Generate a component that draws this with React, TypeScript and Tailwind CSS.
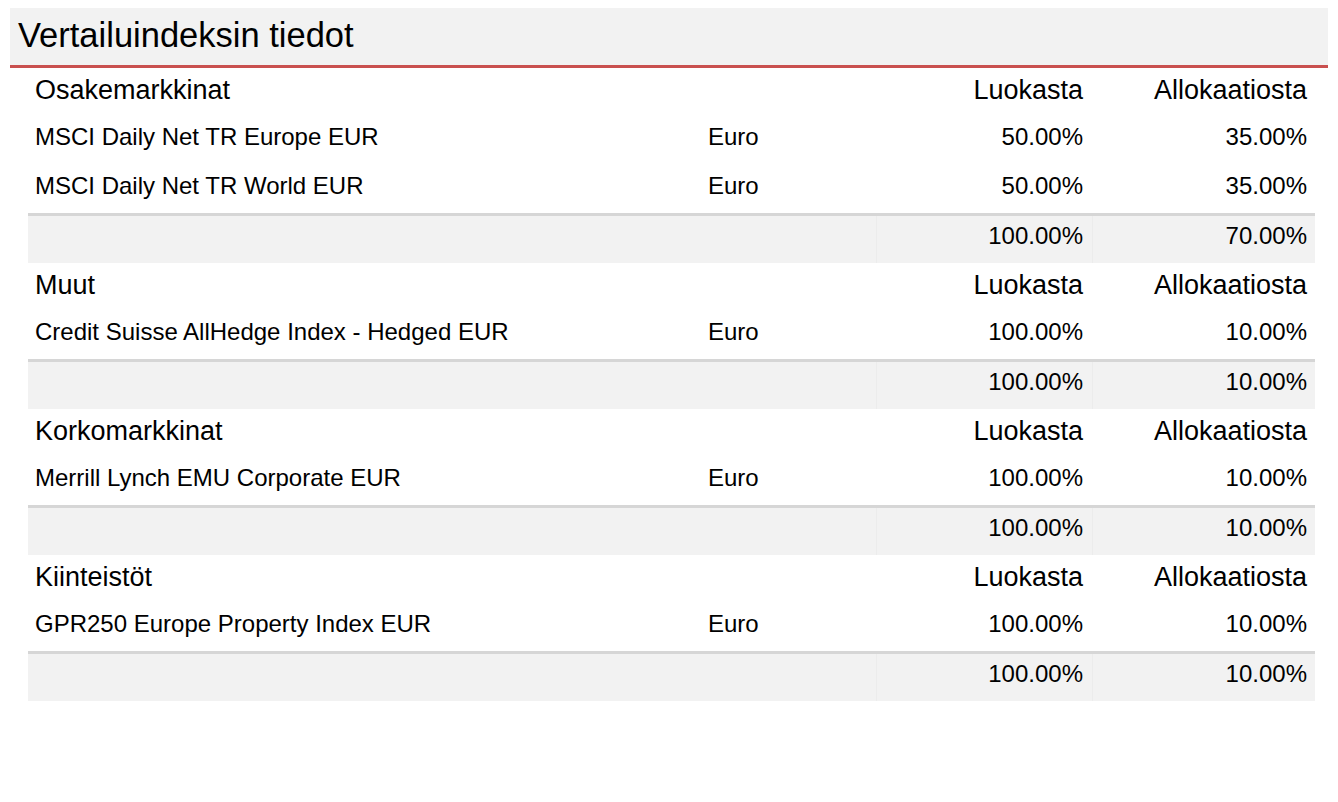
const sections = [
  {
    title: 'Osakemarkkinat',
    rows: [
      { name: 'MSCI Daily Net TR Europe EUR', currency: 'Euro', cls: '50.00%', alloc: '35.00%' },
      { name: 'MSCI Daily Net TR World EUR', currency: 'Euro', cls: '50.00%', alloc: '35.00%' },
    ],
    total: { cls: '100.00%', alloc: '70.00%' },
  },
  {
    title: 'Muut',
    rows: [{ name: 'Credit Suisse AllHedge Index - Hedged EUR', currency: 'Euro', cls: '100.00%', alloc: '10.00%' }],
    total: { cls: '100.00%', alloc: '10.00%' },
  },
  {
    title: 'Korkomarkkinat',
    rows: [{ name: 'Merrill Lynch EMU Corporate EUR', currency: 'Euro', cls: '100.00%', alloc: '10.00%' }],
    total: { cls: '100.00%', alloc: '10.00%' },
  },
  {
    title: 'Kiinteistöt',
    rows: [{ name: 'GPR250 Europe Property Index EUR', currency: 'Euro', cls: '100.00%', alloc: '10.00%' }],
    total: { cls: '100.00%', alloc: '10.00%' },
  },
];

const cols = 'grid grid-cols-[672px_176px_216px_223px]';

export default function App() {
  return (
    <div className="min-h-[802px] bg-white pt-2 font-['Liberation_Sans',Arial,sans-serif] text-black">
      <div className="ml-[10px] w-[1318px]">
        <div className="flex h-[57px] items-center bg-[#f2f2f2] pb-[3px] pl-2 text-[34.5px] leading-none">
          Vertailuindeksin tiedot
        </div>
        <div className="h-[3px] bg-[#c9504f]" />
      </div>

      <div className="ml-[28px] w-[1287px]">
        {sections.map((s) => (
          <div key={s.title}>
            <div className={`${cols} h-[47px] items-center pb-[2px] text-[27px] leading-none`}>
              <div className="pl-[7px]">{s.title}</div>
              <div />
              <div className="pr-[9px] text-right">Luokasta</div>
              <div className="pr-[8px] text-right">Allokaatiosta</div>
            </div>
            {s.rows.map((r) => (
              <div key={r.name} className={`${cols} h-[49px] items-center pb-[5px] text-[24px] leading-none`}>
                <div className="pl-[7px]">{r.name}</div>
                <div className="pl-[8px]">{r.currency}</div>
                <div className="pr-[9px] text-right">{r.cls}</div>
                <div className="pr-[8px] text-right">{r.alloc}</div>
              </div>
            ))}
            <div className={`${cols} h-[50px] border-t-[3px] border-[#d6d6d6] bg-[#f2f2f2] text-[24px] leading-none`}>
              <div />
              <div />
              <div className="flex items-center justify-end border-l border-[#ececec] pb-[8px] pr-[9px]">{s.total.cls}</div>
              <div className="flex items-center justify-end border-l border-[#ececec] pb-[8px] pr-[8px]">{s.total.alloc}</div>
            </div>
          </div>
        ))}
      </div>
    </div>
  );
}
